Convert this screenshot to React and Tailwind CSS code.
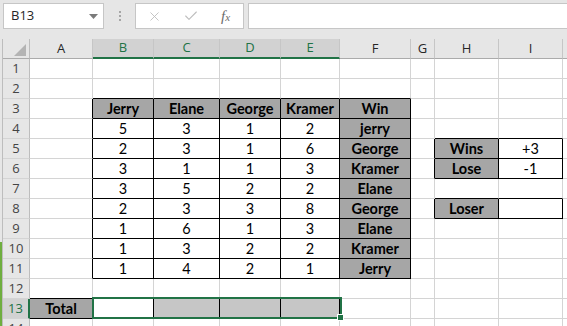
import { X, Check } from "lucide-react";

const COLS = ["A", "B", "C", "D", "E", "F", "G", "H", "I", "J"];
const SELECTED_COLS = ["B", "C", "D", "E"];

// sheet contents, row -> col -> text
const CELLS = {
  3: { B: "Jerry", C: "Elane", D: "George", E: "Kramer", F: "Win" },
  4: { B: "5", C: "3", D: "1", E: "2", F: "jerry" },
  5: { B: "2", C: "3", D: "1", E: "6", F: "George", H: "Wins", I: "+3" },
  6: { B: "3", C: "1", D: "1", E: "3", F: "Kramer", H: "Lose", I: "-1" },
  7: { B: "3", C: "5", D: "2", E: "2", F: "Elane" },
  8: { B: "2", C: "3", D: "3", E: "8", F: "George", H: "Loser" },
  9: { B: "1", C: "6", D: "1", E: "3", F: "Elane" },
  10: { B: "1", C: "3", D: "2", E: "2", F: "Kramer" },
  11: { B: "1", C: "4", D: "2", E: "1", F: "Jerry" },
  13: { A: "Total" },
};

const inRange = (r, c, r1, r2, c1, c2) => {
  const i = COLS.indexOf(c);
  return r >= r1 && r <= r2 && i >= COLS.indexOf(c1) && i <= COLS.indexOf(c2);
};

const bordered = (r, c) =>
  inRange(r, c, 3, 11, "B", "F") ||
  inRange(r, c, 5, 6, "H", "I") ||
  inRange(r, c, 8, 8, "H", "I") ||
  inRange(r, c, 13, 13, "A", "E");

const isHeading = (r, c) =>
  inRange(r, c, 3, 3, "B", "F") ||
  inRange(r, c, 4, 11, "F", "F") ||
  (c === "H" && (r === 5 || r === 6 || r === 8)) ||
  (r === 13 && c === "A");

const nextCol = (c) => COLS[COLS.indexOf(c) + 1];

function Cell({ r, c }) {
  const text = CELLS[r]?.[c] ?? "";
  const right = bordered(r, c) || bordered(r, nextCol(c));
  const bottom = bordered(r, c) || bordered(r + 1, c);
  const head = isHeading(r, c);
  const tinted = r === 13 && ["C", "D", "E"].includes(c);
  const active = r === 13 && c === "B";
  return (
    <div
      className={[
        "relative flex items-center justify-center whitespace-nowrap border-r border-b pt-px text-[14.5px] text-black",
        right ? "border-r-black" : "border-r-[#d4d4d4]",
        bottom ? "border-b-black" : "border-b-[#d4d4d4]",
        head ? "bg-[#a6a6a6] font-bold" : tinted ? "bg-[#c6c6c6]" : "bg-white",
      ].join(" ")}
    >
      {text}
      {active && (
        // selection outline over B13:E13
        <div className="pointer-events-none absolute top-[-2px] left-[-1px] z-10 h-[22px] w-[250px] border-2 border-[#217346]">
          <div className="absolute right-[-4px] bottom-[-4px] h-[7px] w-[7px] border border-white bg-[#217346]" />
        </div>
      )}
    </div>
  );
}

function TopBar() {
  return (
    <div className="flex h-[39px] items-start bg-[#e6e6e6] pt-[3px] pl-[3px]">
      <div className="flex h-[26px] w-[101px] items-center justify-between border border-[#c6c6c6] bg-white pl-[7px] pr-[5px] font-['Open_Sans'] text-[13px] text-[#262626]">
        <span>B13</span>
        <svg width="9" height="5" viewBox="0 0 9 5">
          <path d="M0 0h9L4.5 5z" fill="#7a7a7a" />
        </svg>
      </div>
      <div className="flex w-[31px] flex-col items-center gap-[2px] pt-[8px]">
        <span className="h-[2px] w-[2px] bg-[#a6a6a6]" />
        <span className="h-[2px] w-[2px] bg-[#a6a6a6]" />
        <span className="h-[2px] w-[2px] bg-[#a6a6a6]" />
      </div>
      <div className="flex h-[26px] w-[109px] items-center border border-[#c6c6c6] bg-white pl-[11px]">
        <X size={15} strokeWidth={1.4} color="#bdbdbd" />
        <Check size={16} strokeWidth={1.6} color="#bdbdbd" className="ml-[21px]" />
        <span className="ml-[22px] font-['Liberation_Serif'] text-[15px] italic leading-none text-[#6b6b6b]">
          f<span className="text-[11px]">x</span>
        </span>
      </div>
      <div className="ml-[4px] h-[26px] flex-1 border border-r-0 border-[#c6c6c6] bg-white" />
    </div>
  );
}

export default function App() {
  const rows = Array.from({ length: 14 }, (_, i) => i + 1);
  return (
    <div className="h-[326px] w-[567px] overflow-hidden bg-white font-['Lato',sans-serif]">
      <TopBar />
      <div className="flex">
        <div className="flex w-[3px] shrink-0 flex-col border-r border-[#bdbdbd]">
          <div className="h-[203px] bg-[#e6e6e6]" />
          <div className="h-[100px] bg-[#6fae3f]" />
        </div>
        <div className="grid shrink-0 grid-cols-[27px_63px_61px_66px_61px_59px_71px_24px_64px_64px_100px] grid-rows-[20px_repeat(14,20px)]">
          {/* corner */}
          <div className="flex items-end justify-end border-r border-b border-r-[#bdbdbd] border-b-[#ababab] bg-[#e6e6e6] pr-[3px] pb-[2px]">
            <svg width="12" height="12" viewBox="0 0 12 12">
              <path d="M12 0v12H0z" fill="#b4b4b4" />
            </svg>
          </div>
          {COLS.map((c) => {
            const sel = SELECTED_COLS.includes(c);
            return (
              <div
                key={c}
                className={[
                  "flex items-center justify-center border-r border-r-[#c6c6c6] font-['Open_Sans'] text-[13px]",
                  sel
                    ? "border-b-2 border-b-[#217346] bg-[#d2d2d2] text-[#217346]"
                    : "border-b border-b-[#ababab] bg-[#e6e6e6] text-[#262626]",
                ].join(" ")}
              >
                {c === "J" ? "" : c}
              </div>
            );
          })}
          {rows.map((r) => [
            <div
              key={"h" + r}
              className={[
                "flex items-center justify-center border-b border-b-[#d4d4d4] font-['Open_Sans'] text-[13px]",
                r === 13
                  ? "border-r-2 border-r-[#217346] bg-[#d2d2d2] text-[#217346]"
                  : "border-r border-r-[#bdbdbd] bg-[#e6e6e6] text-[#444444]",
              ].join(" ")}
            >
              {r}
            </div>,
            ...COLS.map((c) => <Cell key={c + r} r={r} c={c} />),
          ])}
        </div>
      </div>
    </div>
  );
}
